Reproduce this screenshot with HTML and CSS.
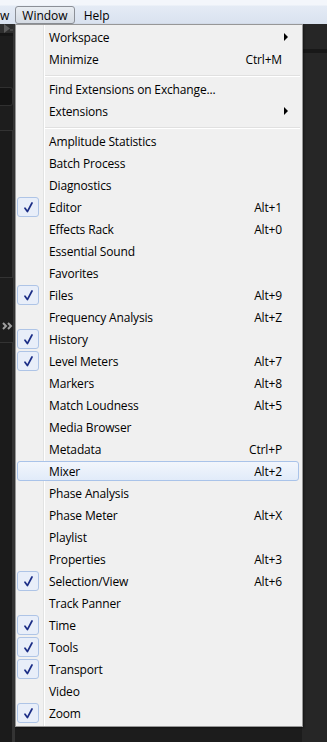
FILE: index.html
```html
<!DOCTYPE html>
<html>
<head>
    <meta charset="utf-8">
    <title>Window menu</title>
    <link rel="stylesheet" href="styles.css">
</head>
<body>

<div class="menubar">
    <span class="mb-item cut">w</span>
    <span class="mb-item open">Window</span>
    <span class="mb-item">Help</span>
</div>

<div class="workspace">
    <div class="side">
        <div class="side-top"><svg class="tool" width="12" height="9" viewBox="0 0 12 9"><path d="M3 0 L9 4.5 L3 9 Z" fill="#5c5c5c"/><path d="M9 6 H12" stroke="#5c5c5c" stroke-width="1"/></svg></div>
        <div class="side-box"></div>
        <div class="side-panel"></div>
        <div class="side-more"><svg width="11" height="8" viewBox="0 0 11 8"><path d="M1 1 L4 4 L1 7 M6 1 L9 4 L6 7" fill="none" stroke="#a0a0a0" stroke-width="2"/></svg></div>
        <div class="side-panel low"></div>
    </div>
    <div class="main">
        <div class="main-band"></div>
    </div>
</div>

<div class="menu">
    <ul>
        <li><span class="chk"></span><span class="lbl">Workspace</span><span class="sub"></span></li>
        <li><span class="chk"></span><span class="lbl">Minimize</span><span class="key">Ctrl+M</span></li>
        <li class="sep"></li>
        <li><span class="chk"></span><span class="lbl">Find Extensions on Exchange...</span></li>
        <li><span class="chk"></span><span class="lbl">Extensions</span><span class="sub"></span></li>
        <li class="sep"></li>
        <li><span class="chk"></span><span class="lbl">Amplitude Statistics</span></li>
        <li><span class="chk"></span><span class="lbl">Batch Process</span></li>
        <li><span class="chk"></span><span class="lbl">Diagnostics</span></li>
        <li class="on"><span class="chk"><svg width="9" height="11" viewBox="0 0 9 11"><path d="M1 6.2 L3.4 9.6 L8 1"/></svg></span><span class="lbl">Editor</span><span class="key">Alt+1</span></li>
        <li><span class="chk"></span><span class="lbl">Effects Rack</span><span class="key">Alt+0</span></li>
        <li><span class="chk"></span><span class="lbl">Essential Sound</span></li>
        <li><span class="chk"></span><span class="lbl">Favorites</span></li>
        <li class="on"><span class="chk"><svg width="9" height="11" viewBox="0 0 9 11"><path d="M1 6.2 L3.4 9.6 L8 1"/></svg></span><span class="lbl">Files</span><span class="key">Alt+9</span></li>
        <li><span class="chk"></span><span class="lbl">Frequency Analysis</span><span class="key">Alt+Z</span></li>
        <li class="on"><span class="chk"><svg width="9" height="11" viewBox="0 0 9 11"><path d="M1 6.2 L3.4 9.6 L8 1"/></svg></span><span class="lbl">History</span></li>
        <li class="on"><span class="chk"><svg width="9" height="11" viewBox="0 0 9 11"><path d="M1 6.2 L3.4 9.6 L8 1"/></svg></span><span class="lbl">Level Meters</span><span class="key">Alt+7</span></li>
        <li><span class="chk"></span><span class="lbl">Markers</span><span class="key">Alt+8</span></li>
        <li><span class="chk"></span><span class="lbl">Match Loudness</span><span class="key">Alt+5</span></li>
        <li><span class="chk"></span><span class="lbl">Media Browser</span></li>
        <li><span class="chk"></span><span class="lbl">Metadata</span><span class="key">Ctrl+P</span></li>
        <li class="hover"><span class="chk"></span><span class="lbl">Mixer</span><span class="key">Alt+2</span></li>
        <li><span class="chk"></span><span class="lbl">Phase Analysis</span></li>
        <li><span class="chk"></span><span class="lbl">Phase Meter</span><span class="key">Alt+X</span></li>
        <li><span class="chk"></span><span class="lbl">Playlist</span></li>
        <li><span class="chk"></span><span class="lbl">Properties</span><span class="key">Alt+3</span></li>
        <li class="on"><span class="chk"><svg width="9" height="11" viewBox="0 0 9 11"><path d="M1 6.2 L3.4 9.6 L8 1"/></svg></span><span class="lbl">Selection/View</span><span class="key">Alt+6</span></li>
        <li><span class="chk"></span><span class="lbl">Track Panner</span></li>
        <li class="on"><span class="chk"><svg width="9" height="11" viewBox="0 0 9 11"><path d="M1 6.2 L3.4 9.6 L8 1"/></svg></span><span class="lbl">Time</span></li>
        <li class="on"><span class="chk"><svg width="9" height="11" viewBox="0 0 9 11"><path d="M1 6.2 L3.4 9.6 L8 1"/></svg></span><span class="lbl">Tools</span></li>
        <li class="on"><span class="chk"><svg width="9" height="11" viewBox="0 0 9 11"><path d="M1 6.2 L3.4 9.6 L8 1"/></svg></span><span class="lbl">Transport</span></li>
        <li><span class="chk"></span><span class="lbl">Video</span></li>
        <li class="on"><span class="chk"><svg width="9" height="11" viewBox="0 0 9 11"><path d="M1 6.2 L3.4 9.6 L8 1"/></svg></span><span class="lbl">Zoom</span></li>
    </ul>
</div>

</body>
</html>
```

FILE: styles.css
```css
* { padding: 0; margin: 0; box-sizing: border-box; }
li { list-style: none; }

body { background: #1f1f1f; font-family: "Open Sans", "Liberation Sans", sans-serif; font-size: 12px; color: #000; height: 742px; overflow: hidden; }

/* menu bar */
.menubar { height: 24px; display: flex; align-items: flex-end; background: linear-gradient(#f3f6fb 0, #f3f6fb 5px, #e4ebf5 6px, #d9e2ef); }
.mb-item { height: 18px; line-height: 17px; padding: 0 6px; border: 1px solid transparent; }
.mb-item.cut { padding: 0 3px 0 0; margin-left: -1px; }
.mb-item.open { border-color: #8c9097; border-radius: 3px; background: linear-gradient(#e9edf2, #d5dbe3); margin-left: 3px; }
.mb-item + .mb-item { margin-left: 2px; }

/* dark workspace behind the menu */
.workspace { display: flex; height: 718px; }
.side { width: 15px; display: flex; flex-direction: column; border-right: 2px solid #343434; background: #1d1d1d; }
.side-top { height: 9px; background: #2e2e2e; border-bottom: 3px solid #161616; box-sizing: content-box; }
.tool { display: block; margin-left: 1px; }
.side-box { height: 19px; margin: 51px 0 24px; background: #141414; border: 1px solid #303030; border-radius: 0 3px 3px 0; border-left: none; }
.side-panel { height: 148px; border: 1px solid #333; border-left: none; background: #1b1b1b; }
.side-more { margin-top: 44px; height: 8px; padding-left: 2px; }
.side-more svg { display: block; }
.side-panel.low { flex: 1; margin-top: 12px; border-bottom: none; }
.main { flex: 1; background: #1c1c1c; display: flex; justify-content: flex-end; }
.main-band { width: 25px; background: #262626; border-top: 25px solid #262626; }
.main-band::before { content: ""; display: block; height: 4px; background: #181818; }

/* popup menu */
.menu { position: absolute; left: 15px; top: 24px; width: 288px; height: 703px; background: #f0f0f0; border: 1px solid #979797; padding: 1px 3px 2px 1px; box-shadow: 1px 1px 2px rgba(0,0,0,0.4); background-image: linear-gradient(to right, transparent 27px, #e2e3e3 27px, #e2e3e3 28px, #fff 28px, #fff 29px, transparent 29px); }
.menu li { height: 22px; display: flex; align-items: center; }
.menu .sep { height: 8px; margin-left: 28px; margin-right: -1px; background: linear-gradient(transparent 5px, #e0e0e0 5px, #e0e0e0 6px, #fff 6px, #fff 7px, transparent 7px); }
.chk { width: 22px; height: 20px; margin-right: 10px; flex: none; border-radius: 3px; display: flex; align-items: center; justify-content: center; }
.chk svg { fill: none; stroke: #1b2d86; stroke-width: 1.7; stroke-linecap: round; stroke-linejoin: round; }
.on .chk { border: 1px solid #aec4e6; background: #e8eef9; }
.lbl { flex: 1; white-space: nowrap; letter-spacing: -0.15px; }
.key { padding-right: 17px; letter-spacing: -0.15px; }
.sub { width: 0; height: 0; margin-right: 11px; border-left: 4px solid #000; border-top: 4px solid transparent; border-bottom: 4px solid transparent; }
.menu .hover { border: 1px solid #a9c3e9; border-radius: 3px; background: linear-gradient(#f2f6fc, #e1ebf9); height: 20px; margin: 1px 0; }
.hover .chk { width: 21px; }
.hover .key { padding-right: 16px; }
```
